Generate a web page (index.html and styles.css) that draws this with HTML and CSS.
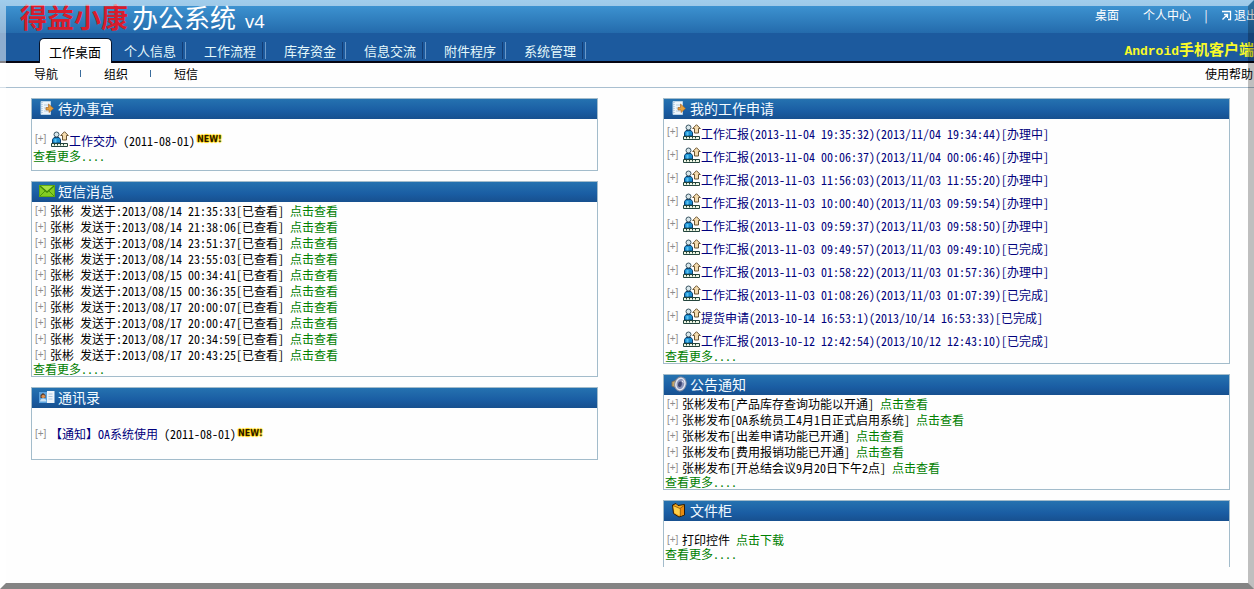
FILE: index.html
```html
<!DOCTYPE html>
<html lang="zh-CN">
<head>
<meta charset="utf-8">
<title>办公系统 v4</title>
<link rel="stylesheet" href="styles.css">
</head>
<body>
<svg class="symbols" aria-hidden="true">
  <symbol id="task" viewBox="0 0 18 16">
    <path d="M1.500 12V8.500L3 6.500h5l1.500 2V12z" fill="#1b8fd0" stroke="#0b3f6c"/>
    <path d="M3.500 8h2v3.500h-2z" fill="#5cc3f0"/>
    <circle cx="5.500" cy="3.500" r="2.500" fill="#d8e6ea" stroke="#3a5563"/>
    <path d="M13.500.700L17.300 4.500H15.500V9h-4V4.500H9.700z" fill="#f5dcae" stroke="#6b5532"/>
    <path d="M.500 12.500h16v3H.500z" fill="#eef6e4" stroke="#23443c"/>
    <path d="M3.500 13v1.500M6.500 13v1.500M9.500 13v1.500M12.500 13v1.500" stroke="#23443c"/>
  </symbol>
  <symbol id="note" viewBox="0 0 16 16">
    <path d="M2 1.500h9.500v13H2z" fill="#eef5fb" stroke="#b9d3e8"/>
    <path d="M3 2v12" stroke="#8db4d6" stroke-dasharray="1 1"/>
    <path d="M5 5h4M5 8h3M5 11h4" stroke="#b4cde0"/>
    <path d="M7 7.500h2.500V4L14.500 8.500 10 12.500V10H7z" fill="#e5a13d" stroke="#a9672a" stroke-width=".7"/>
  </symbol>
  <symbol id="mail" viewBox="0 0 16 16">
    <path d="M0 2h16v12H0z" fill="#63ac10"/>
    <path d="M1 3h14v10H1z" fill="#83cc22"/>
    <path d="M1 3l7 6 7-6" fill="#a8e247" stroke="#3f8705" stroke-width="1.400"/>
    <path d="M1 13l5-5M15 13l-5-5" stroke="#4b940a"/>
  </symbol>
  <symbol id="card" viewBox="0 0 16 16">
    <path d="M0 3h8v11H0z" fill="#5ba3df"/>
    <path d="M8 2h7.500v12H8z" fill="#edf4fa"/>
    <path d="M9.500 5h4M9.500 7.500h4M9.500 10h4" stroke="#a9c6e0"/>
    <path d="M1.500 6L4 4l2.500 2v3H1.500z" fill="#5c3d2c"/>
    <circle cx="4.300" cy="7.500" r="1.800" fill="#d98d4d"/>
    <path d="M1 12.500c0-4 6.500-4 6.500 0z" fill="#c9e1f4"/>
  </symbol>
  <symbol id="speaker" viewBox="0 0 17 17">
    <path d="M1 6l3-1 5-4 1 14-6-3-3-1z" fill="#c8a763" stroke="#6f6a63"/>
    <ellipse cx="10" cy="8.500" rx="6" ry="7.500" transform="rotate(15 10 8.500)" fill="#e3e7f1" stroke="#8289a0"/>
    <ellipse cx="10" cy="8.500" rx="4" ry="5.500" transform="rotate(15 10 8.500)" fill="#8992b8"/>
    <ellipse cx="9.500" cy="8.800" rx="2" ry="3" transform="rotate(15 9.500 8.800)" fill="#3b4472"/>
    <path d="M12 5l1 2" stroke="#fff"/>
  </symbol>
  <symbol id="folder" viewBox="0 0 16 16">
    <path d="M1.500 3L5 1.500 7 3.500 13.500 2.500V13L8 15 2.500 11.500z" fill="#f6a91c" stroke="#2d1a05"/>
    <path d="M2.500 4L9 6.500v7L3.500 11z" fill="#ffd049"/>
    <path d="M9.500 6l3.500-2.500V12.500l-3.500 1.500z" fill="#e88a10"/>
    <path d="M2 3.500l7 3 4-3M9.300 6.500V14" fill="none" stroke="#7a4506" stroke-width=".7"/>
  </symbol>
</svg>

<header>
  <div class="brand-bar">
    <h1 class="brand"><span class="company">得益小康</span><span class="product">办公系统</span><span class="version">v4</span></h1>
    <nav class="account">
      <a class="account-desk" href="#">桌面</a>
      <a href="#">个人中心</a>
      <span class="bar">|</span>
      <a class="exit" href="#"><svg width="11" height="11" viewBox="0 0 11 11" aria-hidden="true"><path d="M3 1.500h6.500v8H7M1 1.500h2M1.500 9.500l5-5M3 4.500h3.500V8" fill="none" stroke="#fff" stroke-width="1.300"/></svg>退出</a>
    </nav>
  </div>
  <div class="tab-bar">
    <nav class="tabs">
      <a class="tab active" href="#">工作桌面</a>
      <a class="tab first" href="#">个人信息</a>
      <a class="tab" href="#">工作流程</a>
      <a class="tab" href="#">库存资金</a>
      <a class="tab" href="#">信息交流</a>
      <a class="tab" href="#">附件程序</a>
      <a class="tab" href="#">系统管理</a>
    </nav>
    <a class="android" href="#"><span class="latin">Android</span>手机客户端</a>
  </div>
  <div class="sub-bar">
    <nav class="sub-nav">
      <a href="#">导航</a><i class="tick"></i><a href="#">组织</a><i class="tick"></i><a href="#">短信</a>
    </nav>
    <a href="#">使用帮助</a>
  </div>
</header>

<main class="board">
  <div class="column">
    <section class="panel">
      <h2 class="title"><svg class="title-icon"><use href="#note"/></svg>待办事宜</h2>
      <div class="body roomy">
        <ul class="tasks">
          <li><span class="plus">[+]</span><svg class="task-icon"><use href="#task"/></svg><p><a class="navy" href="#">工作交办</a> (2011-08-01)</p><b class="new">NEW!</b></li>
        </ul>
        <a class="more" href="#">查看更多....</a>
      </div>
    </section>
    <section class="panel">
      <h2 class="title"><svg class="title-icon"><use href="#mail"/></svg>短信消息</h2>
      <div class="body">
        <ul class="lines">
          <li><span class="plus">[+]</span><p>张彬 发送于:2013/08/14 21:35:33[已查看] <a href="#">点击查看</a></p></li>
          <li><span class="plus">[+]</span><p>张彬 发送于:2013/08/14 21:38:06[已查看] <a href="#">点击查看</a></p></li>
          <li><span class="plus">[+]</span><p>张彬 发送于:2013/08/14 23:51:37[已查看] <a href="#">点击查看</a></p></li>
          <li><span class="plus">[+]</span><p>张彬 发送于:2013/08/14 23:55:03[已查看] <a href="#">点击查看</a></p></li>
          <li><span class="plus">[+]</span><p>张彬 发送于:2013/08/15 00:34:41[已查看] <a href="#">点击查看</a></p></li>
          <li><span class="plus">[+]</span><p>张彬 发送于:2013/08/15 00:36:35[已查看] <a href="#">点击查看</a></p></li>
          <li><span class="plus">[+]</span><p>张彬 发送于:2013/08/17 20:00:07[已查看] <a href="#">点击查看</a></p></li>
          <li><span class="plus">[+]</span><p>张彬 发送于:2013/08/17 20:00:47[已查看] <a href="#">点击查看</a></p></li>
          <li><span class="plus">[+]</span><p>张彬 发送于:2013/08/17 20:34:59[已查看] <a href="#">点击查看</a></p></li>
          <li><span class="plus">[+]</span><p>张彬 发送于:2013/08/17 20:43:25[已查看] <a href="#">点击查看</a></p></li>
        </ul>
        <a class="more" href="#">查看更多....</a>
      </div>
    </section>
    <section class="panel">
      <h2 class="title"><svg class="title-icon"><use href="#card"/></svg>通讯录</h2>
      <div class="body tall">
        <ul class="lines">
          <li><span class="plus">[+]</span><p><a class="navy" href="#">【通知】OA系统使用</a> (2011-08-01)</p><b class="new">NEW!</b></li>
        </ul>
      </div>
    </section>
  </div>

  <div class="column">
    <section class="panel">
      <h2 class="title"><svg class="title-icon"><use href="#note"/></svg>我的工作申请</h2>
      <div class="body">
        <ul class="tasks">
          <li><span class="plus">[+]</span><svg class="task-icon"><use href="#task"/></svg><p><a class="navy" href="#">工作汇报(2013-11-04 19:35:32)(2013/11/04 19:34:44)[办理中]</a></p></li>
          <li><span class="plus">[+]</span><svg class="task-icon"><use href="#task"/></svg><p><a class="navy" href="#">工作汇报(2013-11-04 00:06:37)(2013/11/04 00:06:46)[办理中]</a></p></li>
          <li><span class="plus">[+]</span><svg class="task-icon"><use href="#task"/></svg><p><a class="navy" href="#">工作汇报(2013-11-03 11:56:03)(2013/11/03 11:55:20)[办理中]</a></p></li>
          <li><span class="plus">[+]</span><svg class="task-icon"><use href="#task"/></svg><p><a class="navy" href="#">工作汇报(2013-11-03 10:00:40)(2013/11/03 09:59:54)[办理中]</a></p></li>
          <li><span class="plus">[+]</span><svg class="task-icon"><use href="#task"/></svg><p><a class="navy" href="#">工作汇报(2013-11-03 09:59:37)(2013/11/03 09:58:50)[办理中]</a></p></li>
          <li><span class="plus">[+]</span><svg class="task-icon"><use href="#task"/></svg><p><a class="navy" href="#">工作汇报(2013-11-03 09:49:57)(2013/11/03 09:49:10)[已完成]</a></p></li>
          <li><span class="plus">[+]</span><svg class="task-icon"><use href="#task"/></svg><p><a class="navy" href="#">工作汇报(2013-11-03 01:58:22)(2013/11/03 01:57:36)[办理中]</a></p></li>
          <li><span class="plus">[+]</span><svg class="task-icon"><use href="#task"/></svg><p><a class="navy" href="#">工作汇报(2013-11-03 01:08:26)(2013/11/03 01:07:39)[已完成]</a></p></li>
          <li><span class="plus">[+]</span><svg class="task-icon"><use href="#task"/></svg><p><a class="navy" href="#">提货申请(2013-10-14 16:53:1)(2013/10/14 16:53:33)[已完成]</a></p></li>
          <li><span class="plus">[+]</span><svg class="task-icon"><use href="#task"/></svg><p><a class="navy" href="#">工作汇报(2013-10-12 12:42:54)(2013/10/12 12:43:10)[已完成]</a></p></li>
        </ul>
        <a class="more" href="#">查看更多....</a>
      </div>
    </section>
    <section class="panel">
      <h2 class="title"><svg class="title-icon"><use href="#speaker"/></svg>公告通知</h2>
      <div class="body">
        <ul class="lines">
          <li><span class="plus">[+]</span><p>张彬发布[产品库存查询功能以开通] <a href="#">点击查看</a></p></li>
          <li><span class="plus">[+]</span><p>张彬发布[OA系统员工4月1日正式启用系统] <a href="#">点击查看</a></p></li>
          <li><span class="plus">[+]</span><p>张彬发布[出差申请功能已开通] <a href="#">点击查看</a></p></li>
          <li><span class="plus">[+]</span><p>张彬发布[费用报销功能已开通] <a href="#">点击查看</a></p></li>
          <li><span class="plus">[+]</span><p>张彬发布[开总结会议9月20日下午2点] <a href="#">点击查看</a></p></li>
        </ul>
        <a class="more" href="#">查看更多....</a>
      </div>
    </section>
    <section class="panel open">
      <h2 class="title"><svg class="title-icon"><use href="#folder"/></svg>文件柜</h2>
      <div class="body files">
        <ul class="lines">
          <li><span class="plus">[+]</span><p>打印控件 <a href="#">点击下载</a></p></li>
        </ul>
        <a class="more" href="#">查看更多....</a>
      </div>
    </section>
  </div>
</main>
</body>
</html>
```
FILE: styles.css
```css
* { box-sizing: border-box; }

html { height: 100%; }

body {
  margin: 0;
  min-height: 100%;
  overflow-x: hidden;
  background: #fefefe;
  color: #000;
  font: 12px/16px "Noto Sans CJK SC", sans-serif;
  font-feature-settings: "hwid";
  white-space: nowrap;
}

/* Bevelled window edge laid over the page */
body::after {
  content: "";
  position: fixed;
  inset: 0;
  border: 6px solid;
  border-color: rgba(255, 255, 255, .5) rgba(0, 0, 0, .25) rgba(0, 0, 0, .48) rgba(255, 255, 255, .5);
  pointer-events: none;
}

h1, h2, p, ul { margin: 0; padding: 0; font-weight: normal; }
ul { list-style: none; }
a { color: #008000; text-decoration: none; }
header a { color: #000; }
.symbols { display: none; }

.brand-bar {
  display: flex;
  justify-content: space-between;
  height: 33px;
  padding-left: 20px;
  background: linear-gradient(#429bd8, #246bac);
}
.brand {
  display: flex;
  align-items: baseline;
  color: #fff;
  font-size: 26px;
  line-height: 33px;
}
.company { color: #d81c2c; font-size: 27px; font-weight: 700; }
.product { padding-left: 4px; }
.version { padding-left: 9px; font: 18px "Noto Sans", sans-serif; }

.account {
  display: flex;
  align-items: flex-start;
  margin-right: -4px;
  padding-top: 7px;
  color: #fff;
}
.account a { color: #fff; }
.account-desk { margin-right: 24px; }
.bar { padding: 0 12px; }
.account .exit { display: flex; align-items: center; gap: 2px; }

.tab-bar {
  display: flex;
  justify-content: space-between;
  height: 30px;
  padding-left: 39px;
  background: #1c5a9e;
  border-bottom: 2px solid #050512;
}
.tabs { display: flex; padding-top: 5px; height: 30px; }
.tab {
  position: relative;
  width: 80px;
  padding-left: 18px;
  color: #e4f8fb;
  font-size: 13px;
  line-height: 26px;
}
.tab::after {
  content: "";
  position: absolute;
  right: 0;
  top: 4px;
  width: 2px;
  height: 17px;
  border-left: 1px solid #123c74;
  border-right: 1px solid #6a98c8;
}
.tab.active {
  width: 73px;
  padding-left: 9px;
  background: #fff;
  border: 1px solid #06152c;
  border-bottom: 0;
  border-radius: 5px 5px 0 0;
  color: #000;
  line-height: 25px;
}
.tab.active::after { display: none; }
.tab.first { width: 74px; padding-left: 12px; }
.android {
  color: #f8fa28;
  font-size: 15px;
  font-weight: bold;
  line-height: 31px;
}
.latin { font: bold 13px "Liberation Mono", monospace; }

.sub-bar {
  display: flex;
  justify-content: space-between;
  height: 25px;
  padding: 0 1px 0 34px;
  border-bottom: 1px solid #a9bfd0;
  line-height: 22px;
}
.sub-nav { display: flex; align-items: center; padding-bottom: 2px; }
.tick { width: 1px; height: 7px; margin: 0 23px 2px 22px; background: #3a6c9c; }

.board {
  display: grid;
  grid-template-columns: 1fr 1fr;
  gap: 65px;
  padding: 10px 24px 20px 31px;
}
.column { display: flex; flex-direction: column; gap: 10px; }
.panel { border: 1px solid #a3bccb; }
.panel.open { border-bottom: 0; }
.title {
  display: flex;
  align-items: center;
  gap: 3px;
  height: 20px;
  padding-left: 7px;
  background: linear-gradient(#2572b0, #1a5da3 60%, #17508f);
  color: #f4fbff;
  font-size: 14px;
  line-height: 17px;
  padding-bottom: 2px;
}
.title-icon { width: 16px; height: 16px; }

.body { padding: 1px 0; }
.body.roomy { padding: 8px 0; }
.body.tall { padding: 18px 0 17px; }
.body.files { padding: 11px 0 7px; }
.lines li, .tasks li { display: flex; align-items: center; height: 16px; }
.tasks li { height: 23px; }
.tasks p { padding-top: 5px; }
.task-icon { width: 18px; height: 16px; margin-left: 1px; }
.tasks .new { padding-top: 2px; }
.plus {
  width: 18px;
  padding-left: 3px;
  color: #8c8c8c;
  font: 10px/14px "Liberation Sans", sans-serif;
}
.navy { color: #00007c; }
.more { display: block; padding-left: 1px; line-height: 12px; }
.new {
  margin-left: 2px;
  color: #2c1600;
  font: bold 8px/10px "DejaVu Sans", sans-serif;
  text-shadow: 1px 0 1px #ffd400, -1px 0 1px #ffd400, 0 1px 1px #ffd400, 0 -1px 1px #ffd400;
}
```
